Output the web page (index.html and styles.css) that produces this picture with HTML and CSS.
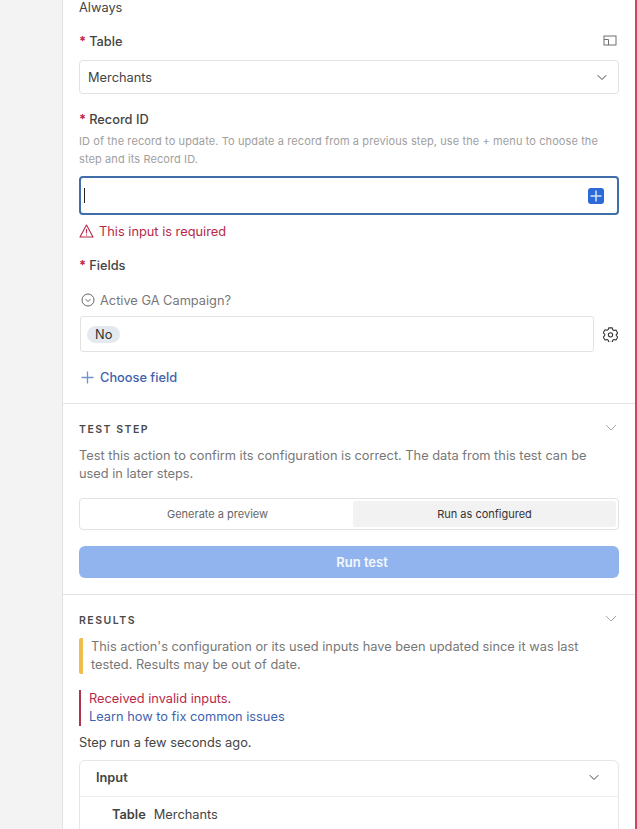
FILE: index.html
```html
<!DOCTYPE html>
<html lang="en">
<head>
  <meta charset="UTF-8" />
  <meta name="viewport" content="width=device-width, initial-scale=1.0" />
  <title>Update record step</title>
  <link rel="stylesheet" href="styles.css">
</head>
<body>
  <div class="sidebar"></div>

  <div class="panel">
    <section class="section config">
      <div class="always">Always</div>

      <div class="label-row table-label">
        <label><span class="req">*</span>Table</label>
        <svg class="pip-icon" width="14" height="11" viewBox="0 0 14 11" fill="none" stroke="#6f6f6f" stroke-width="1">
          <rect x="1" y="1" width="12" height="9" />
          <path d="M1 4.500h4.500v5.500" />
        </svg>
      </div>
      <div class="select">
        <span>Merchants</span>
        <svg width="10" height="7" viewBox="0 0 10 7" fill="none" stroke="#444" stroke-width="1"><path d="M.7 1.200L5 5.500l4.300-4.300" /></svg>
      </div>

      <label class="record-label"><span class="req">*</span>Record ID</label>
      <p class="hint">ID of the record to update. To update a record from a previous step, use the + menu to choose the step and its Record ID.</p>
      <div class="input-focus">
        <span class="caret"></span>
        <span class="plus-btn">
          <svg width="16" height="16" viewBox="0 0 16 16" fill="none" stroke="#d5e3fa" stroke-width="1.500"><path d="M8 2.500v11M2.500 8h11" /></svg>
        </span>
      </div>
      <div class="error-line">
        <svg width="15" height="14" viewBox="0 0 15 14" fill="none" stroke="#b8284a" stroke-width="1.100" stroke-linejoin="round">
          <path d="M7.500 1L14 13H1z" />
          <path d="M7.500 5v4.200M7.500 10.400v1" />
        </svg>
        <span>This input is required</span>
      </div>

      <label class="fields-label"><span class="req">*</span>Fields</label>
      <div class="field-name">
        <svg width="14" height="14" viewBox="0 0 14 14" fill="none" stroke="#666" stroke-width="1">
          <circle cx="7" cy="7" r="6" />
          <path d="M4.500 6l2.500 2.500L9.500 6" />
        </svg>
        <span>Active GA Campaign?</span>
      </div>
      <div class="field-row">
        <div class="field-box"><span class="pill">No</span></div>
        <svg class="gear" width="15" height="15" viewBox="0 0 14 14" fill="none" stroke="#333" stroke-width="1" stroke-linejoin="round">
          <path d="M5.300 .8h3.400l.4 1.800 1.200.7 1.800-.5 1.700 2.900-1.400 1.300v1l1.400 1.300-1.700 2.900-1.800-.5-1.200.7-.4 1.800H5.300l-.4-1.800-1.200-.7-1.800.5L.2 9.300l1.400-1.300V6.700L.2 5.400l1.700-2.900 1.800.5 1.200-.7z" />
          <circle cx="7" cy="7.300" r="2" />
        </svg>
      </div>
      <div class="choose-field">
        <svg width="13" height="13" viewBox="0 0 13 13" fill="none" stroke="#6f93cf" stroke-width="1.300"><path d="M6.500 .5v12M.5 6.500h12" /></svg>
        <span>Choose field</span>
      </div>
    </section>

    <section class="section test-step">
      <div class="section-head">
        <h2>TEST STEP</h2>
        <svg width="12" height="7" viewBox="0 0 12 7" fill="none" stroke="#aaa" stroke-width="1"><path d="M1 1l5 5 5-5" /></svg>
      </div>
      <p class="desc">Test this action to confirm its configuration is correct. The data from this test can be used in later steps.</p>
      <div class="toggle">
        <div class="toggle-opt preview">Generate a preview</div>
        <div class="toggle-opt active">Run as configured</div>
      </div>
      <button class="run-btn" type="button">Run test</button>
    </section>

    <section class="section results">
      <div class="section-head">
        <h2>RESULTS</h2>
        <svg width="12" height="7" viewBox="0 0 12 7" fill="none" stroke="#aaa" stroke-width="1"><path d="M1 1l5 5 5-5" /></svg>
      </div>
      <p class="warning">This action's configuration or its used inputs have been updated since it was last tested. Results may be out of date.</p>
      <div class="invalid">
        <div class="invalid-text">Received invalid inputs.</div>
        <a class="invalid-link" href="#">Learn how to fix common issues</a>
      </div>
      <div class="step-run">Step run a few seconds ago.</div>
      <div class="card">
        <div class="card-head">
          <span>Input</span>
          <svg width="10" height="7" viewBox="0 0 10 7" fill="none" stroke="#444" stroke-width="1"><path d="M.7 1.200L5 5.500l4.300-4.300" /></svg>
        </div>
        <div class="card-row"><b>Table</b><span>Merchants</span></div>
      </div>
    </section>
  </div>
</body>
</html>
```

FILE: styles.css
```css
* {
  margin: 0;
  padding: 0;
  box-sizing: border-box;
}

html, body {
  height: 829px;
  overflow: hidden;
}

body {
  display: flex;
  font-family: Inter, 'Liberation Sans', sans-serif;
  font-size: 12.800px;
  color: #333;
  background: #f3f3f3;
}

.sidebar {
  width: 62px;
  flex-shrink: 0;
}

.panel {
  flex: 1;
  height: 829px;
  overflow: hidden;
  background: #fff;
  border-left: 1px solid #e2e2e2;
  border-right: 2px solid #d2445c;
}

.section {
  padding: 0 16px;
  border-bottom: 1px solid #e3e3e3;
}

.section:last-child {
  border-bottom: none;
}

.config {
  height: 404px;
}

.always {
  line-height: 15px;
  color: #444;
}

.label-row {
  display: flex;
  justify-content: space-between;
  align-items: center;
}

label {
  display: block;
  padding-top: 1px;
  font-weight: 500;
  line-height: 18px;
  color: #444;
}

.req {
  color: #b8284a;
  font-weight: 700;
  margin-right: 3px;
}

.table-label {
  margin-top: 17px;
}

.pip-icon {
  margin: -2px 2px 0 0;
}

.select {
  display: flex;
  justify-content: space-between;
  align-items: center;
  height: 34px;
  margin-top: 9px;
  padding: 0 11px 0 8px;
  border: 1px solid #e2e2e2;
  border-radius: 4px;
  color: #444;
}

.record-label {
  margin-top: 16px;
}

.hint {
  margin-top: 3px;
  padding-right: 20px;
  font-size: 11px;
  line-height: 18px;
  letter-spacing: .1px;
  color: #a0a0a0;
}

.input-focus {
  display: flex;
  justify-content: space-between;
  align-items: center;
  height: 39px;
  margin-top: 8px;
  padding: 0 13px 0 3px;
  border: 2px solid #3f6ea8;
  border-radius: 4px;
}

.caret {
  width: 1px;
  height: 15px;
  background: #222;
}

.plus-btn {
  display: flex;
  align-items: center;
  justify-content: center;
  width: 16px;
  height: 16px;
  border-radius: 3px;
  background: #2b6ad8;
}

.error-line {
  display: flex;
  align-items: center;
  gap: 5px;
  height: 18px;
  margin-top: 7px;
  color: #b8284a;
}

.fields-label {
  margin-top: 16px;
}

.field-name {
  display: flex;
  align-items: center;
  gap: 5px;
  height: 18px;
  margin-top: 16px;
  padding-left: 2px;
  color: #777;
}

.field-row {
  display: flex;
  align-items: center;
  gap: 9px;
  margin-top: 7px;
}

.gear {
  margin-right: 1px;
}

.field-box {
  display: flex;
  align-items: center;
  flex: 1;
  height: 36px;
  margin-left: 1px;
  padding-left: 6px;
  border: 1px solid #e2e2e2;
  border-radius: 3px;
}

.pill {
  padding: 0 8px;
  line-height: 17px;
  border-radius: 9px;
  background: #e4e9f0;
  color: #333;
}

.choose-field {
  display: flex;
  align-items: center;
  gap: 6px;
  height: 18px;
  margin-top: 16px;
  padding-left: 2px;
  font-weight: 500;
  color: #3f62ae;
}

.test-step {
  height: 191px;
  padding-top: 18px;
}

.section-head {
  display: flex;
  justify-content: space-between;
  align-items: center;
  height: 14px;
  padding-right: 2px;
}

.section-head svg {
  margin-top: -3px;
}

h2 {
  font-size: 10.500px;
  font-weight: 600;
  letter-spacing: 1.500px;
  color: #4a4a4a;
}

.desc {
  margin-top: 11px;
  line-height: 18px;
  color: #777;
}

.toggle {
  display: flex;
  height: 32px;
  margin-top: 15px;
  padding: 2px;
  border: 1px solid #e2e2e2;
  border-radius: 4px;
}

.toggle-opt {
  display: flex;
  align-items: center;
  justify-content: center;
  font-size: 11px;
  color: #666;
  border-radius: 3px;
}

.toggle-opt.preview {
  width: 271px;
}

.toggle-opt.active {
  flex: 1;
  background: #f2f2f2;
  color: #333;
}

.run-btn {
  display: block;
  width: 100%;
  height: 32px;
  margin-top: 16px;
  padding-left: 26px;
  border: none;
  border-radius: 6px;
  background: #92b4ee;
  color: #f4f7fd;
  font-family: inherit;
  font-size: 13px;
  font-weight: 600;
}

.results {
  padding-top: 18px;
}

.warning {
  margin-top: 11px;
  padding-left: 8px;
  border-left: 4px solid #efbd4e;
  border-radius: 2px;
  line-height: 18px;
  color: #777;
}

.invalid {
  margin-top: 16px;
  padding-left: 8px;
  border-left: 2px solid #b0344f;
  line-height: 18px;
}

.invalid-text {
  color: #b8284a;
}

.invalid-link {
  display: block;
  color: #3f62ae;
  text-decoration: none;
}

.step-run {
  margin-top: 8px;
  line-height: 18px;
  color: #444;
}

.card {
  height: 120px;
  margin-top: 8px;
  border: 1px solid #e6e6e6;
  border-radius: 6px;
}

.card-head {
  display: flex;
  justify-content: space-between;
  align-items: center;
  height: 36px;
  padding: 0 19px 3px 16px;
  border-bottom: 1px solid #eee;
  font-weight: 600;
  color: #444;
}

.card-row {
  display: flex;
  gap: 8px;
  padding: 9px 0 0 32px;
  line-height: 18px;
  color: #444;
}

.card-row b {
  font-weight: 600;
}
```
